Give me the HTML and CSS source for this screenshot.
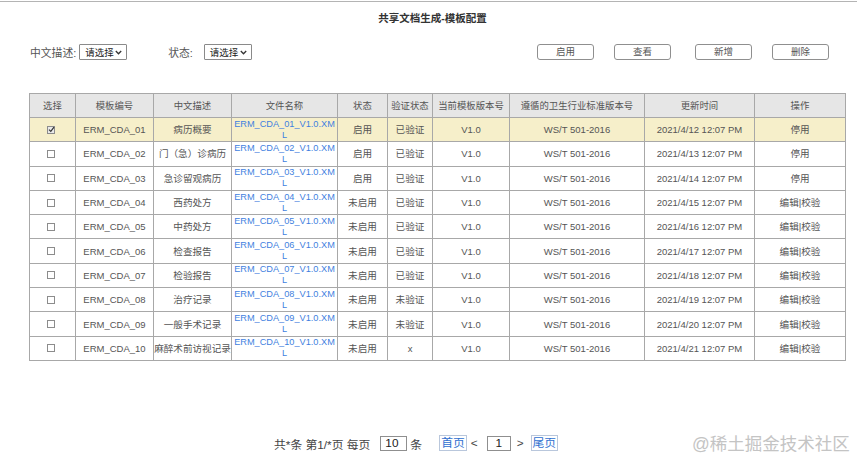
FILE: index.html
```html
<!DOCTYPE html>
<html lang="zh-CN">
<head>
<meta charset="utf-8">
<title>共享文档生成-模板配置</title>
<link rel="stylesheet" href="styles.css">
</head>
<body>
<div class="page">
  <h1 class="title">共享文档生成-模板配置</h1>

  <div class="filters">
    <label class="flabel">中文描述:</label>
    <div class="select">请选择<svg class="chev" width="7" height="5" viewBox="0 0 7 5"><path d="M0.8 1 L3.5 3.8 L6.2 1" fill="none" stroke="#333" stroke-width="1.3"/></svg></div>
    <label class="flabel flabel-2">状态:</label>
    <div class="select">请选择<svg class="chev" width="7" height="5" viewBox="0 0 7 5"><path d="M0.8 1 L3.5 3.8 L6.2 1" fill="none" stroke="#333" stroke-width="1.3"/></svg></div>
    <div class="actions">
      <button class="btn">启用</button>
      <button class="btn">查看</button>
      <button class="btn btn-add">新增</button>
      <button class="btn">删除</button>
    </div>
  </div>

  <table class="grid">
    <colgroup>
      <col style="width:46px"><col style="width:78px"><col style="width:78px"><col style="width:106px"><col style="width:50px"><col style="width:45px"><col style="width:77px"><col style="width:135px"><col style="width:110px"><col style="width:91px">
    </colgroup>
    <thead>
      <tr><th>选择</th><th>模板编号</th><th>中文描述</th><th>文件名称</th><th>状态</th><th>验证状态</th><th>当前模板版本号</th><th>遵循的卫生行业标准版本号</th><th>更新时间</th><th>操作</th></tr>
    </thead>
    <tbody>
      <tr class="sel"><td><span class="cb cb-on"><svg width="7" height="7" viewBox="0 0 7 7"><path d="M1 3.6 L2.8 5.4 L6 1.2" fill="none" stroke="#333" stroke-width="1.2"/></svg></span></td><td>ERM_CDA_01</td><td class="zh">病历概要</td><td><a class="file">ERM_CDA_01_V1.0.XML</a></td><td class="zh">启用</td><td class="zh">已验证</td><td>V1.0</td><td>WS/T 501-2016</td><td>2021/4/12 12:07 PM</td><td class="zh">停用</td></tr>
      <tr><td><span class="cb"></span></td><td>ERM_CDA_02</td><td class="zh">门（急）诊病历</td><td><a class="file">ERM_CDA_02_V1.0.XML</a></td><td class="zh">启用</td><td class="zh">已验证</td><td>V1.0</td><td>WS/T 501-2016</td><td>2021/4/13 12:07 PM</td><td class="zh">停用</td></tr>
      <tr><td><span class="cb"></span></td><td>ERM_CDA_03</td><td class="zh">急诊留观病历</td><td><a class="file">ERM_CDA_03_V1.0.XML</a></td><td class="zh">启用</td><td class="zh">已验证</td><td>V1.0</td><td>WS/T 501-2016</td><td>2021/4/14 12:07 PM</td><td class="zh">停用</td></tr>
      <tr><td><span class="cb"></span></td><td>ERM_CDA_04</td><td class="zh">西药处方</td><td><a class="file">ERM_CDA_04_V1.0.XML</a></td><td class="zh">未启用</td><td class="zh">已验证</td><td>V1.0</td><td>WS/T 501-2016</td><td>2021/4/15 12:07 PM</td><td class="zh">编辑|校验</td></tr>
      <tr><td><span class="cb"></span></td><td>ERM_CDA_05</td><td class="zh">中药处方</td><td><a class="file">ERM_CDA_05_V1.0.XML</a></td><td class="zh">未启用</td><td class="zh">已验证</td><td>V1.0</td><td>WS/T 501-2016</td><td>2021/4/16 12:07 PM</td><td class="zh">编辑|校验</td></tr>
      <tr><td><span class="cb"></span></td><td>ERM_CDA_06</td><td class="zh">检查报告</td><td><a class="file">ERM_CDA_06_V1.0.XML</a></td><td class="zh">未启用</td><td class="zh">已验证</td><td>V1.0</td><td>WS/T 501-2016</td><td>2021/4/17 12:07 PM</td><td class="zh">编辑|校验</td></tr>
      <tr><td><span class="cb"></span></td><td>ERM_CDA_07</td><td class="zh">检验报告</td><td><a class="file">ERM_CDA_07_V1.0.XML</a></td><td class="zh">未启用</td><td class="zh">已验证</td><td>V1.0</td><td>WS/T 501-2016</td><td>2021/4/18 12:07 PM</td><td class="zh">编辑|校验</td></tr>
      <tr><td><span class="cb"></span></td><td>ERM_CDA_08</td><td class="zh">治疗记录</td><td><a class="file">ERM_CDA_08_V1.0.XML</a></td><td class="zh">未启用</td><td class="zh">未验证</td><td>V1.0</td><td>WS/T 501-2016</td><td>2021/4/19 12:07 PM</td><td class="zh">编辑|校验</td></tr>
      <tr><td><span class="cb"></span></td><td>ERM_CDA_09</td><td class="zh">一般手术记录</td><td><a class="file">ERM_CDA_09_V1.0.XML</a></td><td class="zh">未启用</td><td class="zh">未验证</td><td>V1.0</td><td>WS/T 501-2016</td><td>2021/4/20 12:07 PM</td><td class="zh">编辑|校验</td></tr>
      <tr><td><span class="cb"></span></td><td>ERM_CDA_10</td><td class="zh">麻醉术前访视记录</td><td><a class="file">ERM_CDA_10_V1.0.XML</a></td><td class="zh">未启用</td><td>x</td><td>V1.0</td><td>WS/T 501-2016</td><td>2021/4/21 12:07 PM</td><td class="zh">编辑|校验</td></tr>
    </tbody>
  </table>

  <div class="pager">
    <span>共*条 第1/*页 每页</span>
    <span class="pinput pinput-size">10</span>
    <span>条</span>
    <a class="plink plink-first">首页</a>
    <span class="arrow">&lt;</span>
    <span class="pinput pinput-page">1</span>
    <span class="arrow">&gt;</span>
    <a class="plink">尾页</a>
  </div>

  <div class="watermark">@稀土掘金技术社区</div>
</div>
</body>
</html>
```

FILE: styles.css
```css
html, body {
  margin: 0;
  padding: 0;
  background: #fff;
}

body {
  font-family: "Liberation Sans", "Noto Sans CJK SC", sans-serif;
  color: #555;
  width: 860px;
  height: 463px;
  overflow: hidden;
}

.page {
  position: relative;
  margin-top: 1px;
  width: 857px;
  height: 462px;
  border-top: 1px solid #b4b4b4;
}

.title {
  margin: 9px 0 0 0;
  padding-left: 8px;
  height: 14px;
  line-height: 14px;
  font-size: 10.5px;
  font-weight: bold;
  color: #333;
  text-align: center;
}

.filters {
  display: flex;
  align-items: center;
  margin-top: 19px;
  height: 16px;
  padding-left: 30px;
  padding-right: 28px;
  font-size: 10.8px;
}

.flabel {
  color: #555;
  margin-right: 3px;
}

.flabel-2 {
  margin-left: 41px;
  margin-right: 11px;
}

.select {
  display: flex;
  align-items: center;
  justify-content: space-between;
  box-sizing: border-box;
  width: 48px;
  height: 16px;
  padding: 0 4px 0 5px;
  border: 1px solid #8a8a8a;
  border-radius: 1px;
  font-size: 9.5px;
  color: #222;
  background: #fff;
}

.chev {
  display: block;
}

.actions {
  margin-left: auto;
  display: flex;
  gap: 20px;
}

.btn {
  box-sizing: border-box;
  width: 57px;
  height: 16px;
  padding: 0;
  border: 1px solid #8f8f8f;
  border-radius: 3px;
  background: #fff;
  font-family: inherit;
  font-size: 9.5px;
  color: #555;
  line-height: 14px;
}

.btn-add {
  margin-left: 4px;
}

.grid {
  margin: 33px 0 0 29px;
  border-collapse: collapse;
  table-layout: fixed;
  width: 817px;
  font-size: 9.5px;
  color: #555;
}

.grid th,
.grid td {
  border: 1px solid #a8a8a8;
  text-align: center;
  vertical-align: middle;
  padding: 0;
  line-height: 11px;
  overflow: hidden;
  white-space: nowrap;
}

.grid th {
  height: 23px;
  background: #e6e6e6;
  font-weight: normal;
  font-size: 9.4px;
}

.grid td {
  height: 23.3px;
}

.grid td.zh {
  font-size: 9.6px;
}

.grid tr.sel td {
  background: #f6efca;
}

.file {
  display: inline-block;
  width: 103px;
  white-space: normal;
  word-break: break-all;
  color: #3f7fe0;
  font-size: 9.2px;
  line-height: 11px;
  vertical-align: middle;
}

.cb {
  display: inline-flex;
  align-items: center;
  justify-content: center;
  box-sizing: border-box;
  width: 8px;
  height: 8px;
  border: 1px solid #8c8c8c;
  background: #fff;
  vertical-align: middle;
  margin-right: 3px;
  margin-top: -2px;
}

.cb-on {
  background: #e9e9e9;
}

.cb svg {
  display: block;
  flex: none;
}

.pager {
  display: flex;
  align-items: center;
  margin-top: 74px;
  padding-left: 274px;
  height: 17px;
  font-size: 11.8px;
  color: #444;
}

.pinput {
  box-sizing: border-box;
  height: 15px;
  border: 1px solid #8f8f8f;
  line-height: 13px;
  color: #222;
  background: #fff;
}

.pinput-size {
  width: 27px;
  margin-left: 10px;
  margin-right: 3px;
  padding-left: 4px;
}

.pinput-page {
  width: 24px;
  text-align: center;
  margin: 0 6px 0 9px;
}

.plink {
  box-sizing: border-box;
  height: 16px;
  padding: 0 1px;
  line-height: 14px;
  border: 1px solid #b9c7dc;
  color: #2f6fd0;
}

.plink-first {
  margin-left: 17px;
  margin-right: 4px;
}

.arrow {
  color: #444;
}

.arrow + .plink {
  margin-left: 7px;
}

.watermark {
  position: absolute;
  left: 692px;
  top: 431px;
  font-size: 17.5px;
  line-height: 22px;
  color: #c4c4c4;
  white-space: nowrap;
}
```
